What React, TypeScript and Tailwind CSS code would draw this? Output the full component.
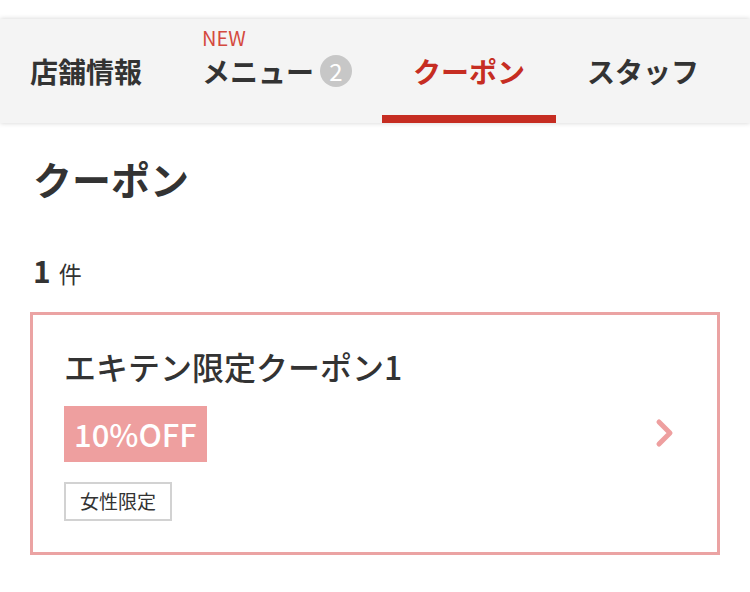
import React from 'react';

const font = { fontFamily: '"Noto Sans CJK JP", "Noto Sans", sans-serif' };

function Tabs() {
  return (
    <nav className="flex h-[104px] bg-[#f4f4f4] shadow-[0_0_5px_rgba(0,0,0,0.18)]">
      <div className="flex items-center px-[30px] text-[28px] font-bold text-[#333]">店舗情報</div>
      <div className="relative flex items-center px-[30px] text-[28px] font-bold text-[#333]">
        {/* NEW label over the menu tab */}
        <span className="absolute left-[30px] top-[9px] text-[20px] font-normal leading-none text-[#d44a3f]">NEW</span>
        <span>メニュー</span>
        <span className="ml-[6px] flex h-[32px] w-[32px] items-center justify-center rounded-full bg-[#c7c7c7] text-[24px] font-normal leading-none text-white">
          2
        </span>
      </div>
      <div className="relative flex items-center px-[31px] text-[28px] font-bold text-[#c62d22]">
        クーポン
        <span className="absolute bottom-0 left-0 right-0 h-[8px] bg-[#c62d22]" />
      </div>
      <div className="flex items-center px-[31px] text-[28px] font-bold text-[#333]">スタッフ</div>
    </nav>
  );
}

function CouponCard() {
  return (
    <div className="mx-[30px] flex items-center border-[3px] border-[#eba3a3] bg-white pb-[31px] pl-[31px] pr-[42px] pt-[31px]">
      <div className="flex flex-1 flex-col items-start">
        <h3 className="text-[32px] font-medium leading-[40px] text-[#333]">エキテン限定クーポン1</h3>
        <div className="mt-[20px] flex h-[56px] items-center bg-[#ee9f9f] px-[10px] text-[31px] font-medium leading-none text-white">
          10%OFF
        </div>
        <div className="mt-[20px] flex h-[39px] items-center border-2 border-[#d2d2d2] px-[14px] text-[19px] text-[#333]">
          女性限定
        </div>
      </div>
      <svg width="20" height="30" viewBox="0 0 20 30" className="shrink-0">
        <path d="M4 4 L15 15 L4 26" fill="none" stroke="#ee9f9f" strokeWidth="5" strokeLinecap="round" strokeLinejoin="round" />
      </svg>
    </div>
  );
}

export default function App() {
  return (
    <div className="min-h-[592px] w-[750px] overflow-hidden bg-white pt-[19px]" style={font}>
      <Tabs />

      <h1 className="mt-[27px] pl-[33px] text-[39px] font-bold leading-[56px] text-[#333]">クーポン</h1>

      <div className="mt-[46px] flex items-baseline gap-[8px] pl-[33px] text-[#333]">
        <span className="text-[30px] font-bold leading-[36px]">1</span>
        <span className="text-[23px]">件</span>
      </div>

      <div className="mt-[21px]">
        <CouponCard />
      </div>
    </div>
  );
}
